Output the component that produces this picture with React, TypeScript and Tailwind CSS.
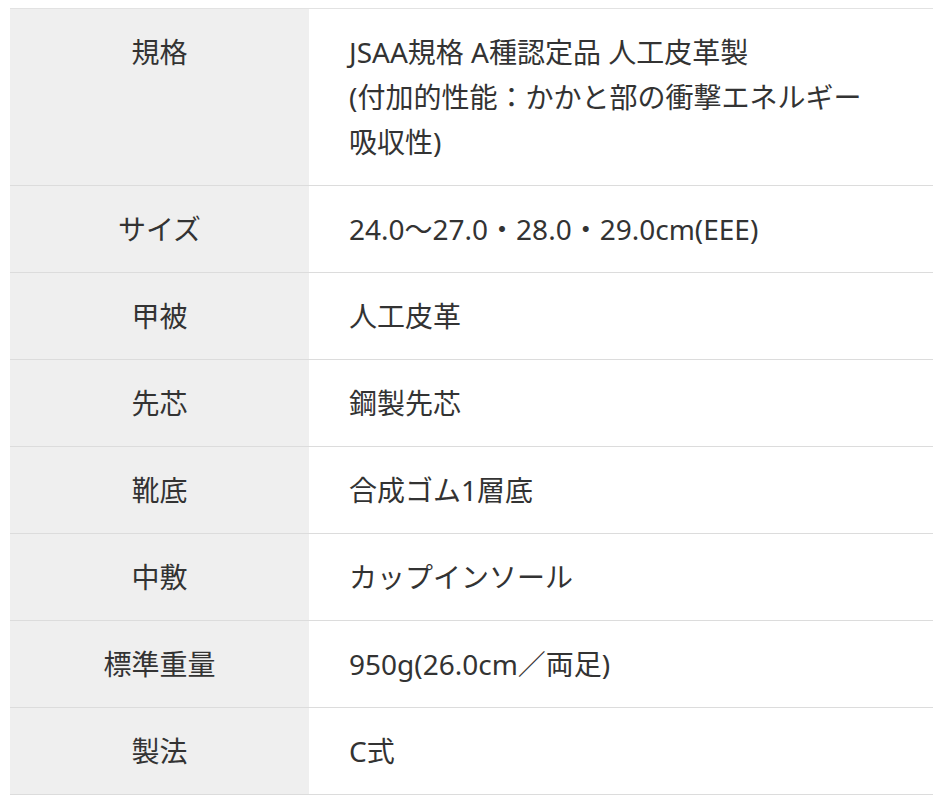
const rows: { label: string; value: string[] }[] = [
  { label: '規格', value: ['JSAA規格 A種認定品 人工皮革製', '(付加的性能：かかと部の衝撃エネルギー', '吸収性)'] },
  { label: 'サイズ', value: ['24.0〜27.0・28.0・29.0cm(EEE)'] },
  { label: '甲被', value: ['人工皮革'] },
  { label: '先芯', value: ['鋼製先芯'] },
  { label: '靴底', value: ['合成ゴム1層底'] },
  { label: '中敷', value: ['カップインソール'] },
  { label: '標準重量', value: ['950g(26.0cm／両足)'] },
  { label: '製法', value: ['C式'] },
];

export default function App() {
  return (
    <div className="min-h-screen bg-white pt-[8px] pl-[10px] pr-[7px]" style={{ fontFamily: '"Noto Sans", "Noto Sans CJK JP", sans-serif' }}>
      <div className="border-t border-[#e2e2e2]">
        {rows.map((row) => (
          <div key={row.label} className="flex border-b border-[#dcdcdc] text-[28px] leading-[45px] text-[#333333]">
            <div className="w-[299px] shrink-0 bg-[#efefef] py-[20.5px] text-center">{row.label}</div>
            <div className="flex-1 bg-white py-[20.5px] pl-[40px] whitespace-nowrap">
              {row.value.map((line) => (
                <div key={line}>{line}</div>
              ))}
            </div>
          </div>
        ))}
      </div>
    </div>
  );
}
